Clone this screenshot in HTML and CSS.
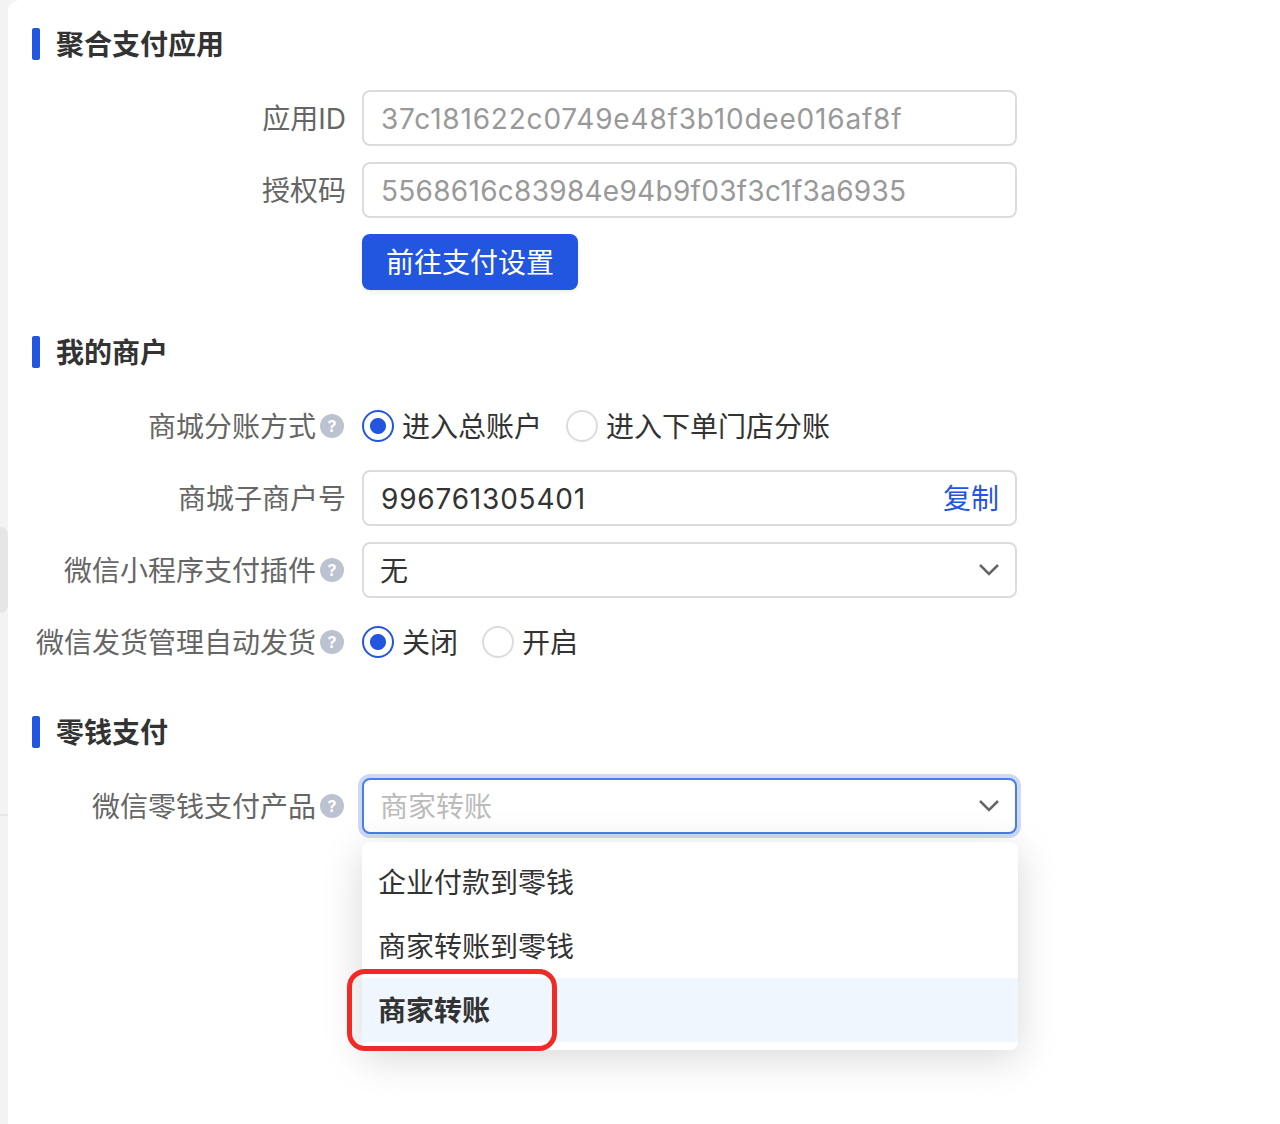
FILE: index.html
```html
<!DOCTYPE html>
<html lang="zh-CN">
<head>
  <meta charset="UTF-8">
  <title>支付设置</title>
  <link rel="stylesheet" href="styles.css">
</head>
<body>
  <div class="side-handle"></div>
  <div class="side-line"></div>

  <div class="panel">
    <!-- 聚合支付应用 -->
    <section class="section">
      <h2 class="section-title"><span>聚合支付应用</span></h2>
      <div class="form-row">
        <label class="form-label">应用ID</label>
        <div class="field field-disabled"><span class="num">37c181622c0749e48f3b10dee016af8f</span></div>
      </div>
      <div class="form-row">
        <label class="form-label">授权码</label>
        <div class="field field-disabled"><span class="num num-tight">5568616c83984e94b9f03f3c1f3a6935</span></div>
      </div>
      <div class="form-row">
        <span class="form-label"></span>
        <button class="btn-primary">前往支付设置</button>
      </div>
    </section>

    <!-- 我的商户 -->
    <section class="section">
      <h2 class="section-title"><span>我的商户</span></h2>
      <div class="form-row">
        <label class="form-label">商城分账方式<span class="help">?</span></label>
        <div class="radio-group">
          <span class="radio radio-on">进入总账户</span>
          <span class="radio">进入下单门店分账</span>
        </div>
      </div>
      <div class="form-row">
        <label class="form-label">商城子商户号</label>
        <div class="field">
          <span class="num">996761305401</span>
          <a class="copy-link">复制</a>
        </div>
      </div>
      <div class="form-row">
        <label class="form-label">微信小程序支付插件<span class="help">?</span></label>
        <div class="field">
          <span>无</span>
          <svg class="chevron" viewBox="0 0 20 12"><path d="M1 1l9 9 9-9"/></svg>
        </div>
      </div>
      <div class="form-row">
        <label class="form-label">微信发货管理自动发货<span class="help">?</span></label>
        <div class="radio-group">
          <span class="radio radio-on">关闭</span>
          <span class="radio">开启</span>
        </div>
      </div>
    </section>

    <!-- 零钱支付 -->
    <section class="section">
      <h2 class="section-title"><span>零钱支付</span></h2>
      <div class="form-row">
        <label class="form-label">微信零钱支付产品<span class="help">?</span></label>
        <div class="select-wrap">
          <div class="field field-focus">
            <span class="placeholder">商家转账</span>
            <svg class="chevron" viewBox="0 0 20 12"><path d="M1 1l9 9 9-9"/></svg>
          </div>
          <ul class="dropdown">
            <li>企业付款到零钱</li>
            <li>商家转账到零钱</li>
            <li class="selected">商家转账</li>
          </ul>
          <div class="red-mark"></div>
        </div>
      </div>
    </section>
  </div>
</body>
</html>
```

FILE: styles.css
```css
*,
*::before {
  margin: 0;
  padding: 0;
  box-sizing: border-box;
}

body {
  position: relative;
  height: 1124px;
  overflow: hidden;
  padding-left: 8px;
  background: #f3f3f3;
  font-family: Inter, "Noto Sans CJK SC", sans-serif;
  font-size: 28px;
  color: #333;
}

.side-handle {
  position: absolute;
  left: 0;
  top: 527px;
  width: 8px;
  height: 86px;
  background: #e6e6e6;
  border-radius: 0 8px 8px 0;
}

.side-line {
  position: absolute;
  left: 0;
  top: 814px;
  width: 8px;
  height: 2px;
  background: #e8e8e8;
}

.panel {
  height: 100%;
  padding: 28px 24px 0;
  background: #fff;
  border-radius: 12px 0 0 0;
}

.section {
  margin-bottom: 46px;
}

.section-title {
  display: flex;
  align-items: center;
  gap: 16px;
  height: 32px;
  margin-bottom: 30px;
  font-size: 28px;
  font-weight: 600;
  color: #333;
}

.section-title span {
  margin-top: -2px;
}

.section-title::before {
  content: "";
  width: 8px;
  height: 32px;
  background: #2356e0;
  border-radius: 2px;
}

.form-row {
  display: flex;
  align-items: center;
  min-height: 56px;
  margin-bottom: 16px;
}

.section .form-row:last-child {
  margin-bottom: 0;
}

.form-label {
  display: flex;
  justify-content: flex-end;
  align-items: center;
  width: 330px;
  margin-left: -16px;
  margin-right: 16px;
  padding-bottom: 2px;
  white-space: nowrap;
  color: #666;
}

.help {
  flex: none;
  width: 24px;
  height: 24px;
  margin: 2px 2px 0 4px;
  border-radius: 50%;
  background: #bcc2d0;
  color: #fff;
  font-size: 16px;
  font-weight: 700;
  line-height: 24px;
  text-align: center;
}

.field {
  display: flex;
  justify-content: space-between;
  align-items: center;
  width: 655px;
  height: 56px;
  padding: 0 16px 2px;
  background: #fff;
  border: 2px solid #dcdcdc;
  border-radius: 8px;
  color: #333;
}

.num {
  margin-top: 4px;
  margin-left: 1px;
  letter-spacing: 0.8px;
}

.num-tight {
  letter-spacing: 0.28px;
}

.field-disabled {
  color: #999;
}

.field-focus {
  border-color: #4a7de8;
  box-shadow: 0 0 0 4px #ced9f5;
}

.placeholder {
  color: #bbb;
}

.copy-link {
  color: #2356e0;
}

.chevron {
  width: 20px;
  height: 12px;
  margin-top: 2px;
  fill: none;
  stroke: #666;
  stroke-width: 2.5;
}

.btn-primary {
  width: 216px;
  height: 56px;
  padding-bottom: 2px;
  border: none;
  border-radius: 8px;
  background: #2356e0;
  color: #fff;
  font-family: inherit;
  font-size: 28px;
  box-shadow: 0 2px 4px rgba(0, 0, 0, 0.08);
}

.radio-group {
  display: flex;
  gap: 24px;
}

.radio {
  display: flex;
  align-items: center;
  gap: 8px;
  padding-bottom: 2px;
  color: #333;
}

.radio::before {
  content: "";
  width: 32px;
  height: 32px;
  margin-top: 2px;
  background: #fff;
  border: 2px solid #dcdcdc;
  border-radius: 50%;
}

.radio-on::before {
  border-color: #2356e0;
  background: radial-gradient(circle, #2356e0 0 7.5px, #fff 8.5px);
}

.select-wrap {
  position: relative;
}

.dropdown {
  position: absolute;
  left: 0;
  top: 64px;
  width: 656px;
  padding: 8px 0;
  list-style: none;
  background: #fff;
  border-radius: 8px;
  box-shadow: 0 8px 40px rgba(0, 0, 0, 0.16);
}

.dropdown li {
  height: 64px;
  padding-left: 16px;
  line-height: 66px;
  color: #333;
}

.dropdown .selected {
  background: #f0f6fe;
  font-weight: 600;
}

.red-mark {
  position: absolute;
  left: -15px;
  top: 191px;
  width: 210px;
  height: 82px;
  border: 5px solid #f22a26;
  border-radius: 18px;
}
```
